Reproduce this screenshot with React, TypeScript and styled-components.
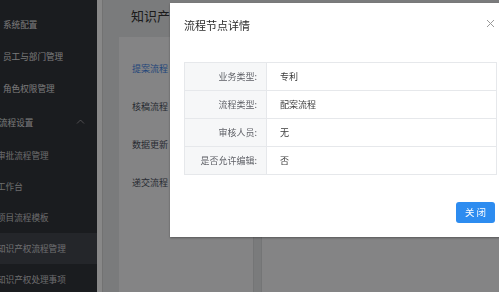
import styled, { createGlobalStyle } from 'styled-components';

const GlobalStyle = createGlobalStyle`
  html, body {
    margin: 0;
    padding: 0;
    width: 499px;
    height: 292px;
    overflow: hidden;
    font-family: "Noto Sans CJK SC", "Noto Sans", sans-serif;
  }
  * {
    box-sizing: border-box;
  }
`;

const menuTop = ['系统配置', '员工与部门管理', '角色权限管理'];
const menuSub = [
  '审批流程管理',
  '工作台',
  '项目流程模板',
  '知识产权流程管理',
  '知识产权处理事项',
];
const flows = ['提案流程', '核稿流程', '数据更新', '递交流程'];
const details = [
  { label: '业务类型:', value: '专利' },
  { label: '流程类型:', value: '配案流程' },
  { label: '审核人员:', value: '无' },
  { label: '是否允许编辑:', value: '否' },
];

export default function App() {
  return (
    <>
      <GlobalStyle />
      <Layout>
        <Sidebar>
          {menuTop.map((name) => (
            <MenuItem key={name}>{name}</MenuItem>
          ))}
          <SubmenuTitle>
            流程设置
            <svg width="9" height="5" viewBox="0 0 9 5">
              <path
                d="M1 4.5 L4.5 1 L8 4.5"
                fill="none"
                stroke="rgba(255,255,255,0.45)"
                strokeWidth="1"
              />
            </svg>
          </SubmenuTitle>
          {menuSub.map((name) => (
            <SubmenuItem key={name} active={name === '知识产权流程管理'}>
              {name}
            </SubmenuItem>
          ))}
        </Sidebar>
        <ScrollTrack />
        <Content>
          <PageTitle>知识产权流程管理</PageTitle>
          <Panels>
            <FlowCard>
              {flows.map((name, i) => (
                <FlowItem key={name} active={i === 0}>
                  {name}
                </FlowItem>
              ))}
            </FlowCard>
            <DetailCard />
          </Panels>
        </Content>
      </Layout>
      <Mask />
      <Modal>
        <ModalHeader>
          <ModalTitle>流程节点详情</ModalTitle>
          <CloseButton>
            <svg width="9" height="9" viewBox="0 0 9 9">
              <path
                d="M1 1 L8 8 M8 1 L1 8"
                stroke="#999"
                strokeWidth="1"
                fill="none"
              />
            </svg>
          </CloseButton>
        </ModalHeader>
        <ModalBody>
          <Table>
            <tbody>
              {details.map((row) => (
                <tr key={row.label}>
                  <LabelCell>{row.label}</LabelCell>
                  <ValueCell>{row.value}</ValueCell>
                </tr>
              ))}
            </tbody>
          </Table>
        </ModalBody>
        <ModalFooter>
          <PrimaryButton>关闭</PrimaryButton>
        </ModalFooter>
      </Modal>
    </>
  );
}

const Layout = styled.div`
  display: flex;
  width: 499px;
  height: 292px;
  background: #dfe0e2;
`;

const Sidebar = styled.nav`
  width: 97px;
  flex-shrink: 0;
  background: #313339;
  padding-top: 8px;
  overflow: hidden;
  font-size: 8.6px;
`;

const MenuItem = styled.div`
  height: 32px;
  line-height: 32px;
  padding-left: 3px;
  color: rgba(255, 255, 255, 0.85);
  white-space: nowrap;
`;

const SubmenuTitle = styled.div`
  height: 36px;
  display: flex;
  align-items: center;
  justify-content: space-between;
  padding-right: 12px;
  color: rgba(255, 255, 255, 0.85);
  white-space: nowrap;
  text-indent: -1px;
  svg {
    margin-top: -2px;
  }
`;

const SubmenuItem = styled.div<{ active?: boolean }>`
  height: 31px;
  line-height: 31px;
  text-indent: -3px;
  overflow: hidden;
  white-space: nowrap;
  color: rgba(255, 255, 255, 0.72);
  background: ${(p) => (p.active ? '#42454d' : 'transparent')};
`;

const ScrollTrack = styled.div`
  width: 6px;
  flex-shrink: 0;
  background: #f8f8f8;
  border-right: 1px solid #d0d0d0;
`;

const Content = styled.main`
  flex: 1;
  display: flex;
  flex-direction: column;
  padding: 7px 0 0 16px;
  min-width: 0;
`;

const PageTitle = styled.h1`
  margin: 0;
  padding-left: 12px;
  font-size: 13px;
  font-weight: normal;
  line-height: 18px;
  color: #333;
  white-space: nowrap;
`;

const Panels = styled.div`
  flex: 1;
  display: flex;
  gap: 7px;
  margin-top: 12px;
`;

const FlowCard = styled.section`
  width: 135px;
  padding-top: 13px;
  background: #f0f1f2;
  border-right: 1px solid #d4d5d7;
`;

const FlowItem = styled.div<{ active?: boolean }>`
  height: 38px;
  line-height: 38px;
  padding-left: 13px;
  font-size: 9px;
  color: ${(p) => (p.active ? '#3d7fe0' : '#4a4f5c')};
`;

const DetailCard = styled.section`
  flex: 1;
  background: #f0f1f2;
  border-left: 1px solid #d4d5d7;
`;

const Mask = styled.div`
  position: fixed;
  inset: 0;
  background: rgba(0, 0, 0, 0.45);
`;

const Modal = styled.div`
  position: fixed;
  left: 170px;
  top: 3px;
  width: 341px;
  background: #fff;
  box-shadow: 0 1px 2px rgba(0, 0, 0, 0.35);
`;

const ModalHeader = styled.header`
  display: flex;
  align-items: center;
  justify-content: space-between;
  padding: 14px 16px 0 14px;
`;

const ModalTitle = styled.h2`
  margin: 0;
  font-size: 11px;
  font-weight: normal;
  line-height: 16px;
  color: #2b2b2b;
`;

const CloseButton = styled.span`
  display: flex;
  margin-top: -3px;
`;

const ModalBody = styled.div`
  padding: 29px 14px 0;
`;

const Table = styled.table`
  width: 100%;
  border-collapse: collapse;
  border: 1px solid #e6e8eb;
  font-size: 9px;
  td {
    height: 28px;
    border: 1px solid #e6e8eb;
    padding: 0;
  }
`;

const LabelCell = styled.td`
  width: 82px;
  background: #f6f7f8;
  text-align: right;
  padding-right: 9px !important;
  color: #5f6167;
  white-space: nowrap;
`;

const ValueCell = styled.td`
  padding-left: 13px !important;
  color: #3a3a3a;
`;

const ModalFooter = styled.footer`
  display: flex;
  justify-content: flex-end;
  padding: 27px 16px 14px;
`;

const PrimaryButton = styled.button`
  height: 21px;
  padding: 0 7px 0 9px;
  border: none;
  border-radius: 3px;
  background: #2d8cf0;
  color: #fff;
  font-family: inherit;
  font-size: 9.5px;
  letter-spacing: 2px;
  line-height: 21px;
`;
